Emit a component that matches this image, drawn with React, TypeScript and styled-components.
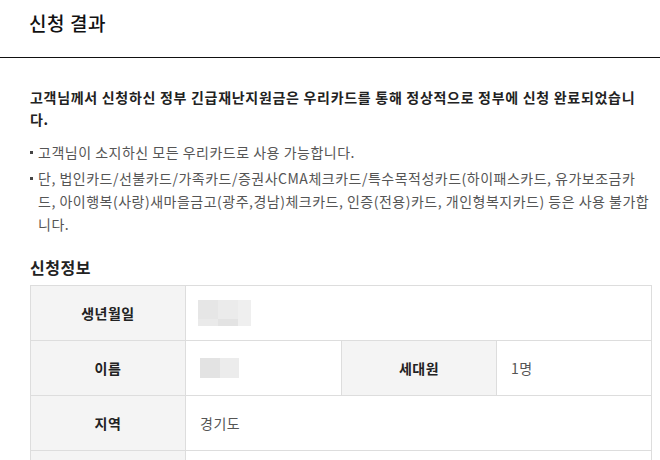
import React from "react";
import styled, { createGlobalStyle } from "styled-components";

const GlobalStyle = createGlobalStyle`
  html, body { margin: 0; padding: 0; background: #fff; }
  body {
    font-family: "Noto Sans CJK KR", "Noto Sans", sans-serif;
    color: #222;
    -webkit-font-smoothing: antialiased;
  }
  * { box-sizing: border-box; }
`;

const Page = styled.div`
  width: 660px;
  height: 460px;
  overflow: hidden;
`;

const Header = styled.header`
  height: 58px;
  display: flex;
  align-items: center;
  padding: 0 0 12px 29px;
  border-bottom: 1px solid #111;
`;

const Title = styled.h1`
  margin: 0;
  font-size: 19px;
  font-weight: 500;
  line-height: 26px;
  color: #111;
  letter-spacing: 0.6px;
`;

const Content = styled.main`
  padding: 28px 9px 0 30px;
`;

const Notice = styled.p`
  margin: 0;
  font-size: 14px;
  font-weight: 700;
  line-height: 22px;
  color: #222;
  letter-spacing: 0.7px;
`;

const Bullets = styled.ul`
  list-style: none;
  margin: 11px 0 0;
  padding: 0;
`;

const Bullet = styled.li`
  position: relative;
  padding-left: 8px;
  font-size: 14px;
  line-height: 23px;
  color: #555;
  letter-spacing: 0.5px;
  & + & { margin-top: 3px; }
  &::before {
    content: "";
    position: absolute;
    left: 0;
    top: 10px;
    width: 3px;
    height: 3px;
    background: #444;
  }
`;

const SectionTitle = styled.h2`
  margin: 20px 0 7px;
  font-size: 16px;
  font-weight: 700;
  line-height: 22px;
  color: #222;
  letter-spacing: 0.5px;
`;

const Table = styled.table`
  width: 622px;
  border-collapse: collapse;
  table-layout: fixed;
`;

const Row = styled.tr`
  height: 55px;
`;

const Label = styled.th`
  background: #f4f4f4;
  border: 1px solid #ddd;
  font-size: 14px;
  font-weight: 700;
  color: #222;
  text-align: center;
  padding: 0;
  letter-spacing: 0.5px;
`;

const Value = styled.td`
  border: 1px solid #ddd;
  font-size: 14px;
  font-weight: 400;
  color: #555;
  padding: 0 0 0 14px;
  text-align: left;
  letter-spacing: 0.5px;
`;

const Mosaic = styled.div<{ $shift: number }>`
  display: flex;
  margin-left: ${(p) => p.$shift}px;
`;

const Tile = styled.div<{ $w: number; $h: number; $top: string; $bottom?: string }>`
  width: ${(p) => p.$w}px;
  height: ${(p) => p.$h}px;
  background: ${(p) =>
    p.$bottom
      ? `linear-gradient(to bottom, ${p.$top} 0 75%, ${p.$bottom} 75% 100%)`
      : p.$top};
`;

export default function App() {
  return (
    <Page>
      <GlobalStyle />
      <Header>
        <Title>신청 결과</Title>
      </Header>
      <Content>
        <Notice>
          고객님께서 신청하신 정부 긴급재난지원금은 우리카드를 통해 정상적으로 정부에 신청 완료되었습니다.
        </Notice>
        <Bullets>
          <Bullet>고객님이 소지하신 모든 우리카드로 사용 가능합니다.</Bullet>
          <Bullet>
            단, 법인카드/선불카드/가족카드/증권사CMA체크카드/특수목적성카드(하이패스카드, 유가보조금카드, 아이행복(사랑)새마을금고(광주,경남)체크카드, 인증(전용)카드, 개인형복지카드) 등은 사용 불가합니다.
          </Bullet>
        </Bullets>
        <SectionTitle>신청정보</SectionTitle>
        <Table>
          <colgroup>
            <col style={{ width: 155 }} />
            <col style={{ width: 156 }} />
            <col style={{ width: 155 }} />
            <col style={{ width: 155 }} />
          </colgroup>
          <tbody>
            <Row>
              <Label>생년월일</Label>
              <Value colSpan={3}>
                <Mosaic $shift={-2}>
                  <Tile $w={20} $h={26} $top="#e6e6e6" $bottom="#eaeaea" />
                  <Tile $w={20} $h={26} $top="#ebebeb" $bottom="#e3e3e3" />
                  <Tile $w={13} $h={26} $top="#efefef" />
                </Mosaic>
              </Value>
            </Row>
            <Row>
              <Label>이름</Label>
              <Value>
                <Mosaic $shift={0}>
                  <Tile $w={20} $h={20} $top="#e3e3e3" />
                  <Tile $w={19} $h={20} $top="#ececec" />
                </Mosaic>
              </Value>
              <Label>세대원</Label>
              <Value>1명</Value>
            </Row>
            <Row>
              <Label>지역</Label>
              <Value colSpan={3}>경기도</Value>
            </Row>
            <Row>
              <Label />
              <Value colSpan={3} />
            </Row>
          </tbody>
        </Table>
      </Content>
    </Page>
  );
}
